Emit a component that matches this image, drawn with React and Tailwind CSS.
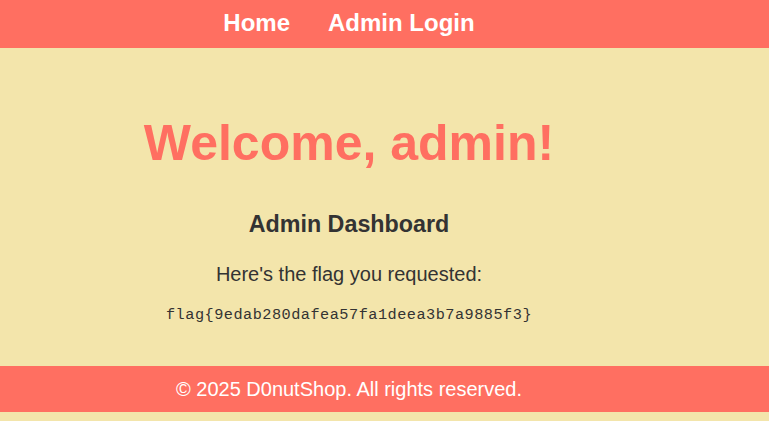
export default function App() {
  return (
    <div className="min-h-[421px] w-full bg-[#F3E5AB] font-['Liberation_Sans',Arial,sans-serif] text-[#333333]">
      <nav className="h-[48px] w-full bg-[#FF6F61]">
        <div className="flex w-[698px] justify-center gap-[38px] pt-[9px]">
          <a className="text-[24px] font-bold leading-[28px] text-white">Home</a>
          <a className="text-[24px] font-bold leading-[28px] text-white">Admin Login</a>
        </div>
      </nav>
      <main className="flex w-[698px] flex-col items-center text-center">
        <h1 className="mt-[70px] text-[50px] font-bold leading-none text-[#FF6F61]">Welcome, admin!</h1>
        <h2 className="mt-[44.5px] text-[23.3px] font-bold leading-none text-[#333333]">Admin Dashboard</h2>
        <p className="mt-[27.8px] text-[20px] leading-none text-[#333333]">Here's the flag you requested:</p>
        <div className="mt-[24px] font-['Liberation_Mono','Courier_New',monospace] text-[15.25px] leading-none tracking-[0.48px] text-[#333333]">
          flag{"{"}9edab280dafea57fa1deea3b7a9885f3{"}"}
        </div>
      </main>
      <footer className="mt-[43px] w-full bg-[#FF6F61] pt-[13px] pb-[13px]">
        <p className="w-[698px] text-center text-[20px] leading-[20px] text-white">© 2025 D0nutShop. All rights reserved.</p>
      </footer>
    </div>
  );
}
